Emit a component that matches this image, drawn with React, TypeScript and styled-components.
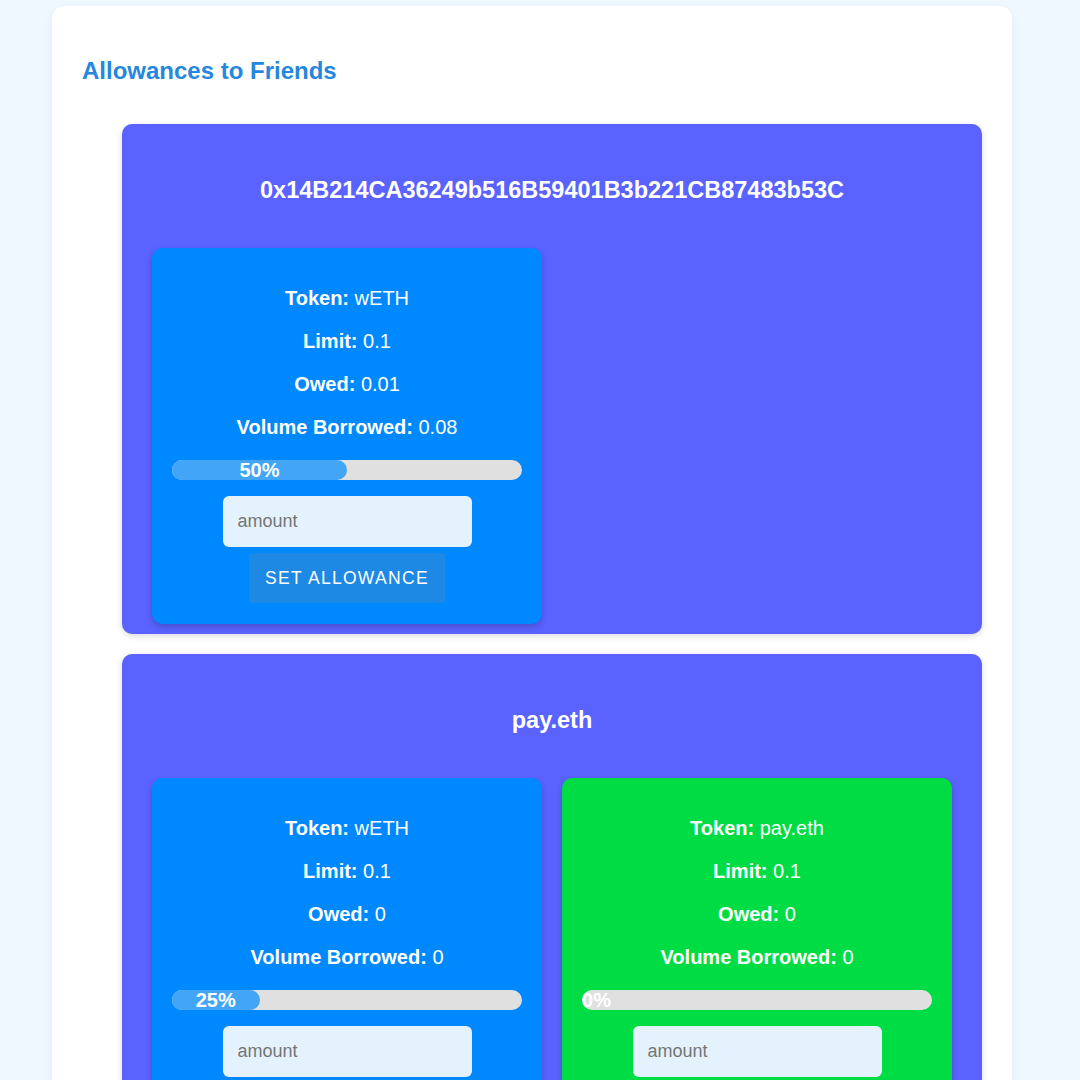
import styled, { createGlobalStyle } from "styled-components";

const GlobalStyle = createGlobalStyle`
    html, body {
        margin: 0;
        padding: 0;
        background: #f0f8ff;
        font-family: "Liberation Sans", Arial, sans-serif;
    }
`;

interface Allowance {
    token: string;
    limit: string;
    owed: string;
    volume: string;
    percent: number;
    variant: "blue" | "green";
}

interface Friend {
    name: string;
    allowances: Allowance[];
}

const friends: Friend[] = [
    {
        name: "0x14B214CA36249b516B59401B3b221CB87483b53C",
        allowances: [
            { token: "wETH", limit: "0.1", owed: "0.01", volume: "0.08", percent: 50, variant: "blue" },
        ],
    },
    {
        name: "pay.eth",
        allowances: [
            { token: "wETH", limit: "0.1", owed: "0", volume: "0", percent: 25, variant: "blue" },
            { token: "pay.eth", limit: "0.1", owed: "0", volume: "0", percent: 0, variant: "green" },
        ],
    },
];

const Page = styled.div`
    padding: 6px 0 40px 52px;
`;

const Panel = styled.div`
    width: 960px;
    box-sizing: border-box;
    background: #fff;
    border-radius: 12px;
    box-shadow: 0 2px 8px rgba(30, 80, 140, 0.08);
    padding: 30px;
`;

const Heading = styled.h2`
    margin: 22px 0 40px;
    font-size: 24px;
    line-height: 26px;
    font-weight: bold;
    color: #2587dd;
`;

const FriendList = styled.div`
    display: flex;
    flex-direction: column;
    gap: 20px;
    padding-left: 40px;
`;

const FriendCard = styled.div`
    background: #5a62ff;
    border-radius: 10px;
    box-shadow: 0 2px 6px rgba(0, 0, 0, 0.15);
    padding: 30px 30px 10px;
`;

const FriendName = styled.h3`
    margin: 24px 0 46px;
    text-align: center;
    color: #fff;
    font-size: 23.5px;
    line-height: 24px;
    font-weight: bold;
`;

const CardRow = styled.div`
    display: flex;
    gap: 20px;
`;

const AllowanceCard = styled.div<{ $variant: "blue" | "green" }>`
    width: 390px;
    box-sizing: border-box;
    background: ${(p) => (p.$variant === "green" ? "#00dd44" : "#0088ff")};
    border-radius: 10px;
    box-shadow: 0 3px 6px rgba(0, 0, 0, 0.2);
    padding: 18px 20px 21px;
    display: flex;
    flex-direction: column;
    align-items: center;
    color: #fff;
`;

const Line = styled.p`
    margin: 22px 0 0;
    font-size: 20px;
    line-height: 21px;
    text-align: center;

    b {
        font-weight: bold;
    }
`;

const Track = styled.div`
    margin-top: 22px;
    align-self: stretch;
    height: 20px;
    border-radius: 10px;
    background: #e0e0e0;
`;

const Fill = styled.div`
    height: 100%;
    border-radius: 10px;
    background: #42a5f5;
    text-align: center;
    white-space: nowrap;
    font-size: 20px;
    font-weight: bold;
    color: #fff;
    line-height: 21px;
`;

const AmountInput = styled.input`
    margin-top: 16px;
    width: 249px;
    height: 51px;
    box-sizing: border-box;
    border: none;
    border-radius: 6px;
    background: #e3f2fd;
    padding: 0 15px;
    font-family: "Liberation Sans", Arial, sans-serif;
    font-size: 18px;
    color: #333;
    outline: none;

    &::placeholder {
        color: #757575;
    }
`;

const SetButton = styled.button`
    margin-top: 6px;
    height: 50px;
    padding: 0 16px;
    border: none;
    border-radius: 4px;
    background: #1e88e5;
    color: #fff;
    font-family: "Liberation Sans", Arial, sans-serif;
    font-size: 17.5px;
    letter-spacing: 1.3px;
    text-transform: uppercase;
    cursor: pointer;
`;

const AllowanceView = ({ a }: { a: Allowance }) => (
    <AllowanceCard $variant={a.variant}>
        <Line><b>Token:</b> {a.token}</Line>
        <Line><b>Limit:</b> {a.limit}</Line>
        <Line><b>Owed:</b> {a.owed}</Line>
        <Line><b>Volume Borrowed:</b> {a.volume}</Line>
        <Track>
            <Fill style={{ width: `${a.percent}%` }}>{a.percent}%</Fill>
        </Track>
        <AmountInput placeholder="amount" />
        <SetButton type="button">Set Allowance</SetButton>
    </AllowanceCard>
);

const App = () => {
    return (
        <>
            <GlobalStyle />
            <Page>
                <Panel>
                    <Heading>Allowances to Friends</Heading>
                    <FriendList>
                        {friends.map((f) => (
                            <FriendCard key={f.name}>
                                <FriendName>{f.name}</FriendName>
                                <CardRow>
                                    {f.allowances.map((a) => (
                                        <AllowanceView key={a.token} a={a} />
                                    ))}
                                </CardRow>
                            </FriendCard>
                        ))}
                    </FriendList>
                </Panel>
            </Page>
        </>
    );
};

export default App;
